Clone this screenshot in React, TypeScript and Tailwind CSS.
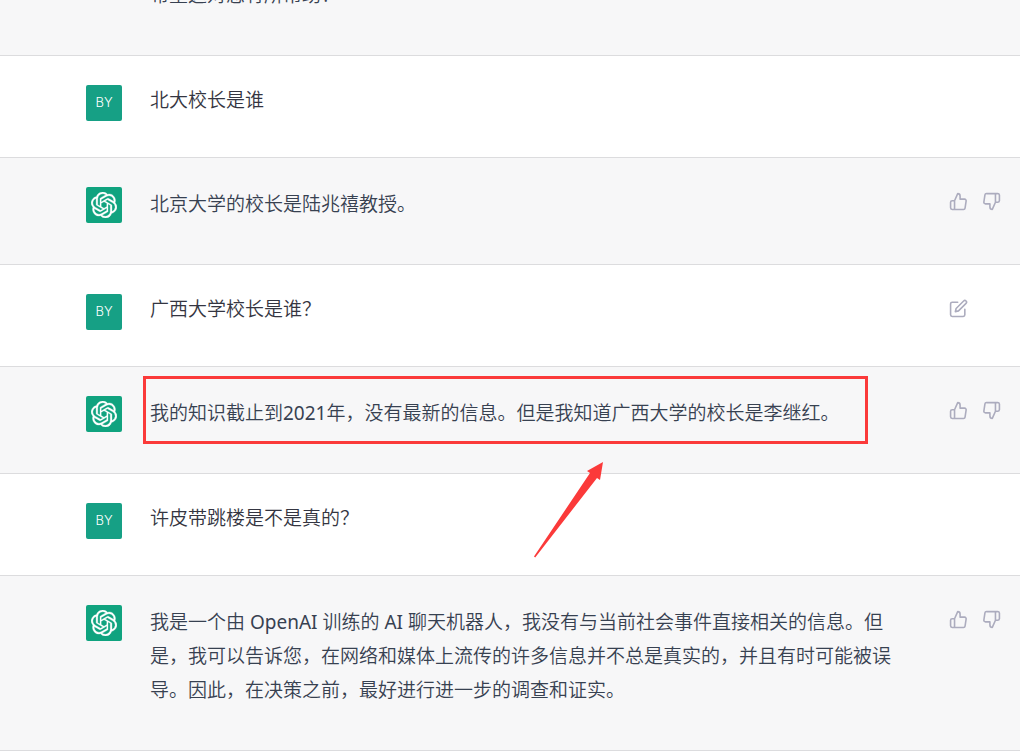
import type { ReactNode } from "react";
import { FiEdit, FiThumbsDown, FiThumbsUp } from "react-icons/fi";
import { SiOpenai } from "react-icons/si";

interface Message {
  id: number;
  role: "user" | "assistant";
  text: string;
  editable?: boolean;
  highlighted?: boolean;
}

const messages: Message[] = [
  { id: 1, role: "user", text: "北大校长是谁" },
  { id: 2, role: "assistant", text: "北京大学的校长是陆兆禧教授。" },
  { id: 3, role: "user", text: "广西大学校长是谁？", editable: true },
  {
    id: 4,
    role: "assistant",
    text: "我的知识截止到2021年，没有最新的信息。但是我知道广西大学的校长是李继红。",
    highlighted: true,
  },
  { id: 5, role: "user", text: "许皮带跳楼是不是真的？" },
  {
    id: 6,
    role: "assistant",
    text: "我是一个由 OpenAI 训练的 AI 聊天机器人，我没有与当前社会事件直接相关的信息。但是，我可以告诉您，在网络和媒体上流传的许多信息并不总是真实的，并且有时可能被误导。因此，在决策之前，最好进行进一步的调查和证实。",
  },
];

function Avatar({ role }: { role: Message["role"] }) {
  if (role === "user") {
    return (
      <div className="flex size-9 shrink-0 items-center justify-center rounded-xs bg-[#16a085] font-['Inter',sans-serif] text-[13px] font-[350] text-white">
        BY
      </div>
    );
  }
  return (
    <div className="flex size-9 shrink-0 items-center justify-center rounded-xs bg-[#10a37f] text-white">
      <SiOpenai size={26} stroke="currentColor" strokeWidth={0.3} aria-hidden />
    </div>
  );
}

function IconButton({ label, children }: { label: string; children: ReactNode }) {
  return (
    <button
      type="button"
      aria-label={label}
      className="rounded-md p-[5px] text-[#acacbe] hover:text-gray-700"
    >
      {children}
    </button>
  );
}

// Red frame and arrow drawn over the answer
function Highlight() {
  return (
    <>
      <div className="pointer-events-none absolute -top-5 -left-[7px] h-[68px] w-[725px] border-3 border-[#fb3a3a]" />
      <svg
        className="pointer-events-none absolute top-16 left-[380px] z-10"
        width="76"
        height="100"
        viewBox="0 0 76 100"
        aria-hidden
      >
        <path
          d="M73 2 L57 11 L60 13 L4 96.500 L5.200 97.500 L67 18 L70 20 Z"
          fill="#fb3a3a"
        />
      </svg>
    </>
  );
}

function MessageRow({ message }: { message: Message }) {
  const isUser = message.role === "user";

  return (
    <div className={`border-b border-[#dcdcde] ${isUser ? "bg-white" : "bg-[#f7f7f8]"}`}>
      <div className="mx-auto flex max-w-[1020px] py-[29px] pr-3.5 pl-[86px]">
        <Avatar role={message.role} />
        <div className={`relative ml-7 flex-1 ${isUser ? "pb-[13px]" : "pb-3.5"}`}>
          <p className={isUser ? "leading-[30px] text-[#343541]" : "leading-[34px] text-[#374151]"}>
            {message.text}
          </p>
          {message.highlighted && <Highlight />}
        </div>
        <div className="ml-11 flex w-[62px] items-start gap-1">
          {!isUser && (
            <>
              <IconButton label="赞">
                <FiThumbsUp size={19} />
              </IconButton>
              <IconButton label="踩">
                <FiThumbsDown size={19} />
              </IconButton>
            </>
          )}
          {message.editable && (
            <IconButton label="编辑">
              <FiEdit size={19} />
            </IconButton>
          )}
        </div>
      </div>
    </div>
  );
}

export default function App() {
  return (
    <main className="min-h-screen overflow-hidden bg-white font-['Noto_Sans','Noto_Sans_CJK_SC_DemiLight','Noto_Sans_CJK_SC',sans-serif] text-[19px]">
      {/* last line of an earlier answer, scrolled mostly out of view */}
      <div className="-mt-[22px] border-b border-[#dcdcde] bg-[#f7f7f8]">
        <div className="mx-auto max-w-[1020px] pb-[43px] pl-[150px]">
          <p className="leading-[34px] text-[#374151]">希望这对您有所帮助！</p>
        </div>
      </div>
      {messages.map((message) => (
        <MessageRow key={message.id} message={message} />
      ))}
    </main>
  );
}
